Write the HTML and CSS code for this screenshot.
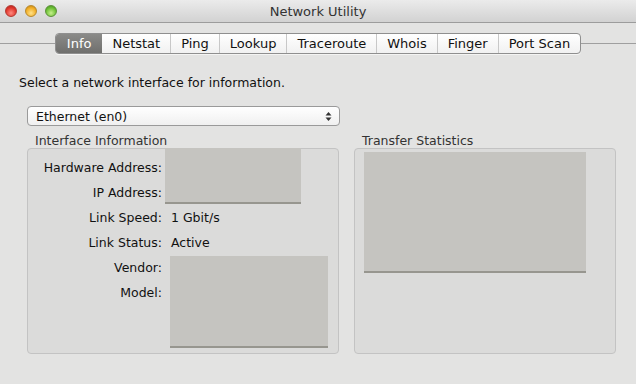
FILE: index.html
```html
<!DOCTYPE html>
<html lang="en">
<head>
    <meta charset="UTF-8">
    <meta name="viewport" content="width=device-width, initial-scale=1.0">
    <title>Network Utility</title>
    <link rel="stylesheet" href="styles.css">
</head>
<body>
    <div class="titlebar">
        <div class="lights">
            <span class="light red"></span>
            <span class="light yellow"></span>
            <span class="light green"></span>
        </div>
        <div class="title">Network Utility</div>
    </div>

    <div class="tabstrip">
        <div class="tabline"></div>
        <div class="tabs">
            <div class="tab selected">Info</div>
            <div class="tab">Netstat</div>
            <div class="tab">Ping</div>
            <div class="tab">Lookup</div>
            <div class="tab">Traceroute</div>
            <div class="tab">Whois</div>
            <div class="tab">Finger</div>
            <div class="tab last">Port Scan</div>
        </div>
        <div class="tabline"></div>
    </div>

    <div class="content">
        <p class="prompt">Select a network interface for information.</p>

        <div class="popup">
            <span>Ethernet (en0)</span>
            <span class="arrows">
                <svg width="7" height="11" viewBox="0 0 7 11">
                    <path d="M3.5 1 L6.5 4.5 L0.5 4.5 Z" fill="#333"/>
                    <path d="M3.5 10 L6.5 6.5 L0.5 6.5 Z" fill="#333"/>
                </svg>
            </span>
        </div>

        <div class="panels">
            <div class="panel left">
                <div class="panel-title">Interface Information</div>
                <div class="box info-grid">
                    <div class="label r1">Hardware Address:</div>
                    <div class="label r2">IP Address:</div>
                    <div class="field addr"></div>
                    <div class="label r3">Link Speed:</div>
                    <div class="value r3">1 Gbit/s</div>
                    <div class="label r4">Link Status:</div>
                    <div class="value r4">Active</div>
                    <div class="label r5">Vendor:</div>
                    <div class="label r6">Model:</div>
                    <div class="field vendor"></div>
                </div>
            </div>
            <div class="panel right">
                <div class="panel-title">Transfer Statistics</div>
                <div class="box">
                    <div class="field stats"></div>
                </div>
            </div>
        </div>
    </div>
</body>
</html>
```

FILE: styles.css
```css
body {
    margin: 0;
    padding: 0;
    background-color: #e3e3e2;
    font-family: 'DejaVu Sans', 'Liberation Sans', sans-serif;
    font-size: 12.5px;
    color: #111;
}

.titlebar {
    height: 22px;
    display: flex;
    align-items: center;
    justify-content: center;
    background: linear-gradient(#ebebeb, #d2d2d2);
    border-bottom: 1px solid #9c9c9c;
    position: relative;
}

.lights {
    position: absolute;
    left: 5px;
    top: 5px;
    display: flex;
    gap: 8px;
}

.light {
    width: 12px;
    height: 12px;
    border-radius: 50%;
    box-sizing: border-box;
}

.light.red {
    background: radial-gradient(circle at 50% 70%, #ff8a80, #e0362c 60%, #a8231b);
    border: 1px solid #b23a32;
}

.light.yellow {
    background: radial-gradient(circle at 50% 70%, #ffe28a, #f1ad25 60%, #b77b12);
    border: 1px solid #b88a2e;
}

.light.green {
    background: radial-gradient(circle at 50% 70%, #c6f08c, #6cbf35 60%, #3f8b1d);
    border: 1px solid #5c913a;
}

.title {
    font-size: 13px;
    color: #333;
}

.tabstrip {
    display: flex;
    align-items: center;
    padding-top: 10px;
}

.tabline {
    flex: 1;
    height: 1px;
    background-color: #9f9f9f;
}

.tabs {
    display: flex;
    height: 21px;
    box-sizing: border-box;
    border: 1px solid #8f8f8f;
    border-radius: 4px;
    background: linear-gradient(#ffffff, #f1f1f1);
    overflow: hidden;
    box-shadow: 0 1px 0 rgba(255, 255, 255, 0.6);
}

.tab {
    display: flex;
    align-items: center;
    padding: 0 10px;
    font-size: 13px;
    border-right: 1px solid #c8c8c8;
}

.tab.last {
    border-right: none;
}

.tab.selected {
    background: linear-gradient(#8a8a88, #6f6f6d);
    color: #fff;
    padding: 0 11px;
    border-right: none;
}

.content {
    padding: 21px 20px 0 19px;
}

.prompt {
    margin: 0 0 16px 0;
    font-size: 12.5px;
}

.popup {
    margin-left: 8px;
    width: 313px;
    height: 20px;
    box-sizing: border-box;
    border: 1px solid #9a9a9a;
    border-radius: 4px;
    background: linear-gradient(#ffffff, #f0f0f0);
    display: flex;
    align-items: center;
    justify-content: space-between;
    padding: 0 7px 0 8px;
    font-size: 12.5px;
}

.arrows {
    display: flex;
}

.panels {
    display: flex;
    gap: 15px;
    margin-left: 8px;
    margin-top: 7px;
}

.panel-title {
    padding-left: 8px;
    height: 15px;
    line-height: 15px;
    color: #333;
}

.panel.left {
    width: 312px;
}

.panel.right {
    width: 262px;
}

.box {
    height: 206px;
    box-sizing: border-box;
    background-color: #dbdbda;
    border: 1px solid #c3c3c3;
    border-radius: 4px;
}

.info-grid {
    display: grid;
    grid-template-columns: 137px 1fr;
    grid-template-rows: repeat(8, 25px);
    column-gap: 0;
    padding-top: 6px;
}

.label {
    grid-column: 1;
    text-align: right;
    align-self: center;
    padding-right: 3px;
}

.value {
    grid-column: 2;
    align-self: center;
    padding-left: 6px;
}

.r1 { grid-row: 1; }
.r2 { grid-row: 2; }
.r3 { grid-row: 3; }
.r4 { grid-row: 4; }
.r5 { grid-row: 5; }
.r6 { grid-row: 6; }

.field {
    background-color: #c5c4c0;
    border-bottom: 2px solid #97968f;
    box-sizing: border-box;
}

.field.addr {
    grid-column: 2;
    grid-row: 1 / 3;
    margin-top: -7px;
    width: 136px;
    height: 56px;
}

.field.vendor {
    grid-column: 2;
    grid-row: 5 / 9;
    margin-top: 1px;
    margin-left: 5px;
    width: 158px;
    height: 92px;
}

.field.stats {
    margin: 3px 0 0 9px;
    width: 222px;
    height: 121px;
}
```
